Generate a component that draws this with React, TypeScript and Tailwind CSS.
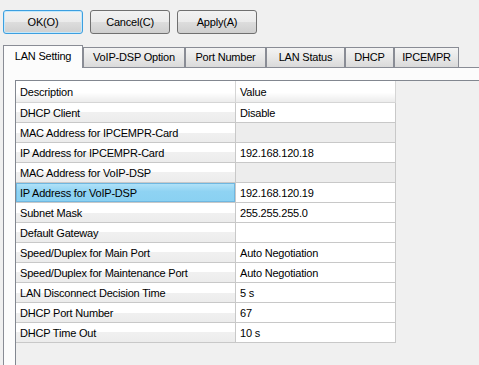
const rows = [
  { name: "DHCP Client", value: "Disable" },
  { name: "MAC Address for IPCEMPR-Card", value: "", locked: true },
  { name: "IP Address for IPCEMPR-Card", value: "192.168.120.18" },
  { name: "MAC Address for VoIP-DSP", value: "", locked: true },
  { name: "IP Address for VoIP-DSP", value: "192.168.120.19", selected: true },
  { name: "Subnet Mask", value: "255.255.255.0" },
  { name: "Default Gateway", value: "" },
  { name: "Speed/Duplex for Main Port", value: "Auto Negotiation" },
  { name: "Speed/Duplex for Maintenance Port", value: "Auto Negotiation" },
  { name: "LAN Disconnect Decision Time", value: "5 s" },
  { name: "DHCP Port Number", value: "67" },
  { name: "DHCP Time Out", value: "10 s" },
];

const tabs = [
  { label: "VoIP-DSP Option", w: "w-[102px]" },
  { label: "Port Number", w: "w-[81px]" },
  { label: "LAN Status", w: "w-[79px]" },
  { label: "DHCP", w: "w-[49px]" },
  { label: "IPCEMPR", w: "w-[65px]" },
];

function Button({ label, focused }: { label: string; focused?: boolean }) {
  return (
    <button
      className={
        "h-[24px] w-[80px] rounded-[3px] border bg-[linear-gradient(#f2f2f2,#ebebeb_50%,#dddddd_50%,#cfcfcf)] " +
        (focused
          ? "border-[#3c9fe0] shadow-[inset_0_0_0_1px_#c4e8fb]"
          : "border-[#707070]")
      }
    >
      {label}
    </button>
  );
}

export default function App() {
  return (
    <div className="w-[479px] h-[365px] overflow-hidden bg-[#f0f0f0] font-['Liberation_Sans',Arial,sans-serif] text-[11px] leading-none tracking-[-0.2px] text-black flex flex-col">
      {/* Dialog buttons */}
      <div className="flex gap-[7px] pl-[3px] pt-[10px]">
        <Button label="OK(O)" focused />
        <Button label="Cancel(C)" />
        <Button label="Apply(A)" />
      </div>

      {/* Tab strip */}
      <div className="relative z-10 mt-[11px] flex h-[22px] items-end pl-[3px]">
        <div className="mb-[-1px] flex h-[23px] w-[80px] items-center justify-center border-x border-t border-[#898c95] bg-[#fcfcfc] pb-[1px]">
          LAN Setting
        </div>
        {tabs.map((t) => (
          <div
            key={t.label}
            className={
              t.w +
              " flex h-[20px] items-center justify-center border-x border-t border-[#898c95] bg-[linear-gradient(#f4f4f4,#e8e8e8_50%,#dadada)]"
            }
          >
            {t.label}
          </div>
        ))}
      </div>

      {/* Tab page */}
      <div className="ml-[3px] flex flex-1 flex-col border-l border-t border-[#898c95] bg-[#fcfcfc] pl-[11px] pt-[12px]">
        <div className="flex-1 border-l border-t border-[#828790] bg-[#f0f0f0]">
          <div className="flex h-[22px]">
            <div className="flex w-[220px] items-center border-b border-r border-[#d5d5d5] bg-[linear-gradient(#ffffff_55%,#ececec)] pl-[4px] pt-[2px]">
              Description
            </div>
            <div className="flex w-[160px] items-center border-b border-r border-[#d5d5d5] bg-[linear-gradient(#ffffff_55%,#ececec)] pl-[4px] pt-[2px]">
              Value
            </div>
          </div>
          {rows.map((r) => (
            <div key={r.name} className="flex h-[20px]">
              <div
                className={
                  "flex w-[220px] items-center border-b border-r pl-[4px] pt-[2px] " +
                  (r.selected
                    ? "border-[#c8c8c8] bg-[linear-gradient(#b4e3f8,#8fd3f3_45%,#8ad1f2)] shadow-[inset_0_0_0_1px_#6fb7e0]"
                    : "border-[#c8c8c8] bg-[linear-gradient(#ffffff_50%,#f0f0f0_50%,#ececec)]")
                }
              >
                {r.name}
              </div>
              <div
                className={
                  "flex w-[160px] items-center border-b border-r border-[#c8c8c8] pl-[4px] pt-[2px] " +
                  (r.locked ? "bg-[#ededed]" : "bg-white")
                }
              >
                {r.value}
              </div>
            </div>
          ))}
        </div>
      </div>
    </div>
  );
}
